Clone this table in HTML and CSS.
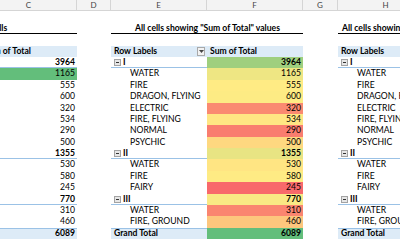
FILE: index.html
```html
<!DOCTYPE html>
<html lang="en">
<head>
    <meta charset="UTF-8">
    <meta name="viewport" content="width=device-width, initial-scale=1.0">
    <title>Pivot colour scales</title>
    <link rel="stylesheet" href="styles.css">
</head>
<body>
    <div class="sheet">
        <!-- Column letters -->
        <div class="colheads">
            <div class="colhead">B</div>
            <div class="colhead">C</div>
            <div class="colhead col-d">D</div>
            <div class="colhead">E</div>
            <div class="colhead">F</div>
            <div class="colhead col-g">G</div>
            <div class="colhead">H</div>
            <div class="colhead">I</div>
        </div>

        <div class="pivots">
            <div class="pivot" id="pivot-selected"></div>
            <div class="spacer"></div>
            <div class="pivot" id="pivot-all"></div>
            <div class="spacer col-g"></div>
            <div class="pivot" id="pivot-type"></div>
        </div>
    </div>

    <script>
        document.addEventListener("DOMContentLoaded", () => {
            const rows = [
                ["I", 0, 3964],
                ["WATER", 1, 1165],
                ["FIRE", 1, 555],
                ["DRAGON, FLYING", 1, 600],
                ["ELECTRIC", 1, 320],
                ["FIRE, FLYING", 1, 534],
                ["NORMAL", 1, 290],
                ["PSYCHIC", 1, 500],
                ["II", 0, 1355],
                ["WATER", 1, 530],
                ["FIRE", 1, 580],
                ["FAIRY", 1, 245],
                ["III", 0, 770],
                ["WATER", 1, 310],
                ["FIRE, GROUND", 1, 460]
            ];
            const grandTotal = 6089;

            const RED = [248, 105, 107];
            const YELLOW = [255, 235, 132];
            const GREEN = [99, 190, 123];

            // 3-colour scale, midpoint at the 50th percentile
            function colourScale(values) {
                const sorted = [...values].sort((a, b) => a - b);
                const n = sorted.length;
                const pos = (n - 1) * 0.5;
                const mid = sorted[Math.floor(pos)] + (sorted[Math.ceil(pos)] - sorted[Math.floor(pos)]) * (pos - Math.floor(pos));
                const min = sorted[0];
                const max = sorted[n - 1];
                return v => {
                    let from, to, t;
                    if (v <= mid) {
                        from = RED; to = YELLOW; t = (v - min) / (mid - min || 1);
                    } else {
                        from = YELLOW; to = GREEN; t = (v - mid) / (max - mid || 1);
                    }
                    const c = from.map((x, i) => Math.round(x + (to[i] - x) * t));
                    return "rgb(" + c.join(",") + ")";
                };
            }

            function cell(cls, text) {
                const div = document.createElement("div");
                div.className = "cell " + cls;
                if (text !== undefined) div.textContent = text;
                return div;
            }

            function row(cls) {
                const div = document.createElement("div");
                div.className = "row " + cls;
                return div;
            }

            function buildPivot(el, title, fillFor) {
                el.appendChild(row("blank"));

                const titleRow = row("title-row");
                titleRow.appendChild(cell("title", title));
                el.appendChild(titleRow);

                el.appendChild(row("blank"));

                const head = row("head");
                const headLabel = cell("label");
                headLabel.innerHTML = '<span>Row Labels</span><span class="filter"><svg width="5" height="3" viewBox="0 0 5 3"><path d="M0 0h5L2.5 3z" fill="#444"/></svg></span>';
                head.appendChild(headLabel);
                head.appendChild(cell("value", "Sum of Total"));
                el.appendChild(head);

                rows.forEach(([label, level, value], i) => {
                    const r = row(level === 0 ? "group" : "item");
                    const lab = cell("label");
                    if (level === 0) {
                        lab.innerHTML = '<svg class="toggle" width="7" height="7" viewBox="0 0 7 7"><rect x=".5" y=".5" width="6" height="6" fill="#e6e6e6" stroke="#a3a3a3"/><path d="M2 3.5h3" stroke="#333"/></svg>';
                        lab.appendChild(document.createTextNode(label));
                    } else {
                        lab.textContent = label;
                    }
                    r.appendChild(lab);
                    const val = cell("value num", value);
                    const fill = fillFor(i, value, level);
                    if (fill) {
                        val.classList.add("filled");
                        val.style.background = fill;
                    }
                    r.appendChild(val);
                    el.appendChild(r);
                });

                const grand = row("grand");
                grand.appendChild(cell("label", "Grand Total"));
                const gv = cell("value num", grandTotal);
                const gfill = fillFor(-1, grandTotal, -1);
                if (gfill) {
                    gv.classList.add("filled");
                    gv.style.background = gfill;
                }
                grand.appendChild(gv);
                el.appendChild(grand);
            }

            const allScale = colourScale(rows.map(r => r[2]).concat(grandTotal));
            const typeScale = colourScale(rows.filter(r => r[1] === 1).map(r => r[2]));

            buildPivot(document.getElementById("pivot-selected"), "Selected cells",
                i => i === 1 ? "rgb(99,190,123)" : null);
            buildPivot(document.getElementById("pivot-all"), 'All cells showing "Sum of Total" values',
                (i, v) => allScale(v));
            buildPivot(document.getElementById("pivot-type"), 'All cells showing "Sum of Total" values for "Type"',
                (i, v, level) => level === 1 ? typeScale(v) : null);
        });
    </script>
</body>
</html>
```

FILE: styles.css
```css
body {
    margin: 0;
    padding: 0;
    overflow: hidden;
    background-color: #fff;
    color: #000;
    font-family: Lato, "Liberation Sans", sans-serif;
    font-size: 8.6px;
}

.sheet {
    margin-left: -115px;
    width: 645px;
}

.colheads {
    display: flex;
    height: 11.4px;
    background-color: #f3f3f3;
    border-bottom: 1px solid #d5d5d5;
    box-sizing: border-box;
}

.colhead {
    flex: none;
    width: 96px;
    border-right: 1px solid #d5d5d5;
    box-sizing: border-box;
    text-align: center;
    line-height: 10.4px;
    font-size: 8px;
    color: #444;
}

.colhead.col-d, .spacer {
    width: 34px;
}

.colhead.col-g, .spacer.col-g {
    width: 35px;
}

.pivots {
    display: flex;
}

.spacer, .pivot {
    flex: none;
}

.pivot {
    width: 192px;
}

.row {
    display: grid;
    grid-template-columns: 96px 96px;
    height: 11.4px;
    line-height: 11.4px;
    white-space: nowrap;
}

.cell {
    overflow: hidden;
    padding: 0 2px 0 3px;
}

.title {
    grid-column: 1 / 3;
    overflow: visible;
    text-align: center;
    font-weight: bold;
    border-bottom: 1px solid #000;
    box-sizing: border-box;
    line-height: 10.4px;
}

.head .cell {
    background-color: #ddebf7;
    font-weight: bold;
}

.head .label {
    display: flex;
    align-items: center;
    justify-content: space-between;
    padding-right: 2px;
}

.filter {
    display: flex;
    align-items: center;
    justify-content: center;
    width: 6px;
    height: 7px;
    border: 1px solid #a9a9a9;
    background-color: #f2f2f2;
}

.toggle {
    vertical-align: -1px;
    margin-right: 2px;
}

.item .label {
    padding-left: 19px;
}

.num {
    text-align: right;
}

.group .cell {
    font-weight: bold;
    box-shadow: inset 0 -1px #9bc2e6;
}

.grand .cell {
    background-color: #ddebf7;
    font-weight: bold;
    box-shadow: inset 0 1px #9bc2e6;
}

.cell.filled {
    box-shadow: none;
}
```
